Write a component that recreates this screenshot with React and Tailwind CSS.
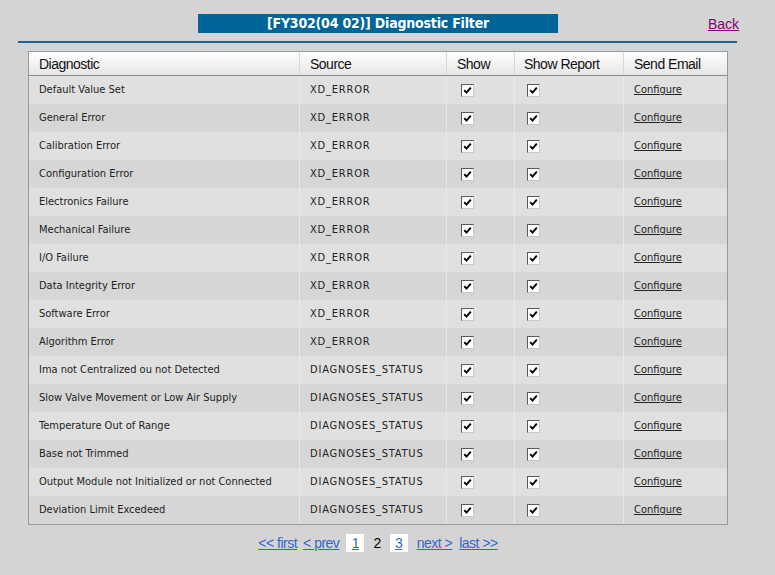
import React from 'react';

const rows = [
  ['Default Value Set', 'XD_ERROR'],
  ['General Error', 'XD_ERROR'],
  ['Calibration Error', 'XD_ERROR'],
  ['Configuration Error', 'XD_ERROR'],
  ['Electronics Failure', 'XD_ERROR'],
  ['Mechanical Failure', 'XD_ERROR'],
  ['I/O Failure', 'XD_ERROR'],
  ['Data Integrity Error', 'XD_ERROR'],
  ['Software Error', 'XD_ERROR'],
  ['Algorithm Error', 'XD_ERROR'],
  ['Ima not Centralized ou not Detected', 'DIAGNOSES_STATUS'],
  ['Slow Valve Movement or Low Air Supply', 'DIAGNOSES_STATUS'],
  ['Temperature Out of Range', 'DIAGNOSES_STATUS'],
  ['Base not Trimmed', 'DIAGNOSES_STATUS'],
  ['Output Module not Initialized or not Connected', 'DIAGNOSES_STATUS'],
  ['Deviation Limit Excedeed', 'DIAGNOSES_STATUS'],
];

// old-style checked box
const Check = () => (
  <span className="inline-flex w-[13px] h-[13px] border border-t-[#5a5a5a] border-l-[#5a5a5a] border-r-[#c8c8c8] border-b-[#c8c8c8] bg-white items-center justify-center">
    <svg width="9" height="9" viewBox="0 0 9 9">
      <path d="M1.2 4.2 L3.5 6.6 L7.8 1.6" stroke="#000" strokeWidth="1.9" fill="none" />
    </svg>
  </span>
);

const App = () => {
  return (
    <div className="w-[775px] h-[575px] bg-[#d4d4d4] font-['Liberation_Sans',Arial,sans-serif] overflow-hidden">
      {/* title + back */}
      <div className="relative h-[41px] pt-[14px]">
        <div className="ml-[198px] w-[360px] h-[19px] bg-[#006699] text-white text-[14px] font-bold leading-[19px] text-center font-['DejaVu_Sans_Condensed','DejaVu_Sans',sans-serif] tracking-[-0.2px]">
          [FY302(04 02)] Diagnostic Filter
        </div>
        <a href="#" className="absolute left-[708px] top-[15px] text-[14px] text-[#800080] underline leading-[18px]">
          Back
        </a>
      </div>
      <div className="ml-[18px] w-[719px] h-[2px] bg-[#1f6496]" />

      {/* table */}
      <div className="ml-[28px] mt-[8px] w-[700px] border border-[#9a9a9a]">
        <div className="flex h-[24px] bg-gradient-to-b from-white to-[#e6e6e6] border-b border-[#8a8a8a] text-[14px] tracking-[-0.5px] text-[#111] leading-[25px]">
          <div className="w-[271px] pl-[10px] border-r border-[#d8d8d8]">Diagnostic</div>
          <div className="w-[147px] pl-[10px] border-r border-[#d8d8d8]">Source</div>
          <div className="w-[68px] pl-[10px] border-r border-[#d8d8d8]">Show</div>
          <div className="w-[109px] pl-[9px] border-r border-[#d8d8d8]">Show Report</div>
          <div className="flex-1 pl-[10px]">Send Email</div>
        </div>
        {rows.map(([name, src], i) => (
          <div
            key={name}
            className={`flex h-[28px] items-center text-[11px] text-[#222] font-['DejaVu_Sans_Condensed','DejaVu_Sans',sans-serif] ${i % 2 === 0 ? 'bg-[#e0e0e0]' : 'bg-[#d6d6d6]'}`}
          >
            <div className="w-[271px] h-full flex items-center pl-[10px] pt-[1px] border-r border-[#e8e8e8]">{name}</div>
            <div className="w-[147px] h-full flex items-center pl-[10px] pt-[1px] border-r border-[#e8e8e8] tracking-[0.8px]">{src}</div>
            <div className="w-[68px] h-full flex items-center pl-[14px] border-r border-[#e8e8e8]"><Check /></div>
            <div className="w-[109px] h-full flex items-center pl-[12px] border-r border-[#e8e8e8]"><Check /></div>
            <div className="flex-1 h-full flex items-center pl-[10px] pt-[1px]">
              <a href="#" className="underline text-[#222]">Configure</a>
            </div>
          </div>
        ))}
      </div>

      {/* pager */}
      <div className="ml-[28px] w-[700px] mt-[9px] flex justify-center items-center text-[14px] tracking-[-0.5px] leading-[18px]">
        <a href="#" className="text-[#3366cc] underline">&lt;&lt; first</a>
        <a href="#" className="ml-[6px] text-[#3366cc] underline">&lt; prev</a>
        <a href="#" className="ml-[7px] w-[18px] text-center bg-white text-[#3366cc] underline">1</a>
        <span className="ml-[9px] text-black">2</span>
        <a href="#" className="ml-[9px] w-[18px] text-center bg-white text-[#3366cc] underline">3</a>
        <a href="#" className="ml-[9px] text-[#3366cc] underline">next &gt;</a>
        <a href="#" className="ml-[7px] text-[#3366cc] underline">last &gt;&gt;</a>
      </div>
    </div>
  );
};

export default App;
